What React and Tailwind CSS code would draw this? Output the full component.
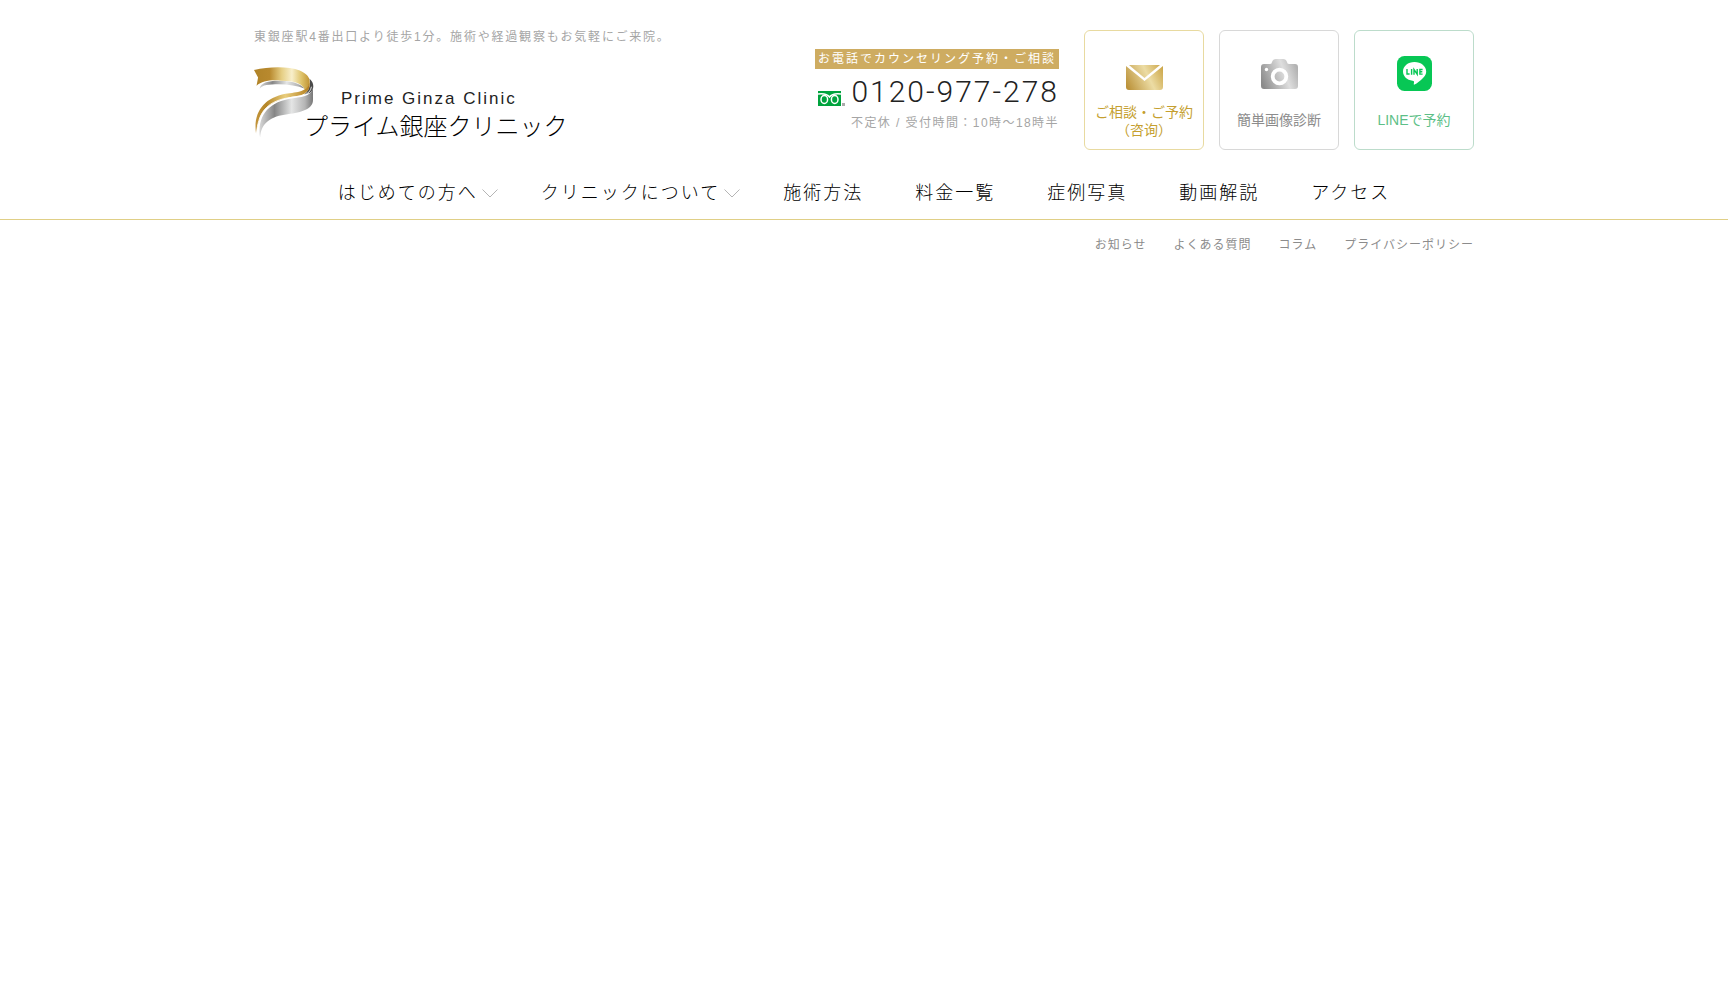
const MAIN_NAV = [
  { label: 'はじめての方へ', menu: true },
  { label: 'クリニックについて', menu: true },
  { label: '施術方法' },
  { label: '料金一覧' },
  { label: '症例写真' },
  { label: '動画解説' },
  { label: 'アクセス' },
]

const SUB_NAV = ['お知らせ', 'よくある質問', 'コラム', 'プライバシーポリシー']

function RibbonMark() {
  return (
    <svg viewBox="0 0 59 70" className="h-[72px] w-[60px] shrink-0" aria-hidden>
      <defs>
        <linearGradient id="gold" x1="0" x2="1" y1="0" y2="0">
          <stop offset="0" stopColor="#b08328" />
          <stop offset="0.28" stopColor="#b8892e" />
          <stop offset="0.5" stopColor="#e6cf85" />
          <stop offset="0.68" stopColor="#f8efcb" />
          <stop offset="0.85" stopColor="#dfc46c" />
          <stop offset="1" stopColor="#c09332" />
        </linearGradient>
        <linearGradient id="gold-tail" x1="0" x2="1" y1="0" y2="0">
          <stop offset="0" stopColor="#c2943a" />
          <stop offset="0.2" stopColor="#b58628" />
          <stop offset="0.55" stopColor="#e9cd7c" />
          <stop offset="1" stopColor="#b27d1d" />
        </linearGradient>
        <linearGradient id="silver" x1="0" x2="1" y1="0" y2="0">
          <stop offset="0" stopColor="#d8d8d8" />
          <stop offset="0.28" stopColor="#868686" />
          <stop offset="0.6" stopColor="#e4e5e5" />
          <stop offset="0.85" stopColor="#b5b5b5" />
          <stop offset="1" stopColor="#777" />
        </linearGradient>
      </defs>
      <path d="M5.500 21C6 15 14 13 24 13C36 13 45 15 50 21C43 18 34 16.500 24 16.500C15 16.500 8 17 5.500 21Z" fill="url(#silver)" />
      <path d="M54.500 11C60 16 59 22 55 25L49 27C54 23 56 18 54.500 11Z" fill="#4a4a4a" />
      <path d="M0 2.500C16 -1 34 -1 45 3C57 8 57 17 50 22C48 16 40 13 27 13C17 12 8 13 2.500 18L4 10Z" fill="url(#gold)" />
      <path d="M2 65C-1 44 10 30 31 26C43 24 53 24 54.500 14C56 22 51 27 42 28C22 31 8 38 5 52C3 57 3 61 2 65Z" fill="url(#gold-tail)" />
      <path d="M6 69C3 49 13 35 34 31C47 29 56 29 58 20V32C58 41 47 44 33 46C17 48 7 54 6 69Z" fill="url(#silver)" />
      <path d="M2.500 65C4 46 11 34 33 30C46 28 55 28 56.500 19" fill="none" stroke="#fff" strokeWidth="0.800" />
    </svg>
  )
}

function FreeDialIcon() {
  return (
    <svg viewBox="0 0 27 15" className="h-[15px] w-[27px] shrink-0" aria-hidden>
      <rect width="23" height="15" fill="#00a33e" />
      <g fill="none" stroke="#fff" strokeWidth="1.500">
        <ellipse cx="6.300" cy="8.500" rx="3.300" ry="4" />
        <ellipse cx="16.700" cy="8.500" rx="3.300" ry="4" />
        <path d="M0 3C4 2.500 9 2.500 11.500 6C14 2.500 19 2.500 23 3" />
      </g>
      <rect x="24" y="12" width="3" height="3" fill="#aaa" />
    </svg>
  )
}

function MailIcon() {
  return (
    <svg viewBox="0 0 37 25" className="h-[25px] w-[37px]" aria-hidden>
      <defs>
        <linearGradient id="mail" gradientUnits="userSpaceOnUse" x1="0" x2="37" y1="22" y2="4">
          <stop offset="0" stopColor="#b98f35" />
          <stop offset="0.6" stopColor="#ecdca4" />
          <stop offset="1" stopColor="#cda84c" />
        </linearGradient>
      </defs>
      <path d="M3 0H34L18.500 13Z" fill="url(#mail)" />
      <path d="M0 1L18.500 16L37 1V22Q37 25 34 25H3Q0 25 0 22Z" fill="url(#mail)" />
    </svg>
  )
}

function CameraIcon() {
  return (
    <svg viewBox="0 0 37 30" className="h-[30px] w-[37px]" aria-hidden>
      <defs>
        <linearGradient id="camera" x1="0" x2="1" y1="0.700" y2="0.400">
          <stop offset="0" stopColor="#8b8b8b" />
          <stop offset="0.65" stopColor="#dedede" />
          <stop offset="1" stopColor="#b2b2b2" />
        </linearGradient>
      </defs>
      <path
        d="M3 5H9Q11 5 11 3Q12 0 15 0H22Q25 0 26 3Q26 5 28 5H34Q37 5 37 8V27Q37 30 34 30H3Q0 30 0 27V8Q0 5 3 5Z"
        fill="url(#camera)"
      />
      <circle cx="18.500" cy="17.500" r="6.800" fill="none" stroke="#fff" strokeWidth="3.800" />
      <circle cx="5.500" cy="10.500" r="1.700" fill="#fff" />
    </svg>
  )
}

function LineIcon() {
  return (
    <svg viewBox="0 0 35 35" className="size-[35px]" aria-hidden>
      <rect width="35" height="35" rx="7.500" fill="#07c755" />
      <path d="M17.500 6C24 6 29.200 10.200 29.200 15.500C29.200 18 28 20 26 22C23.500 24.800 20 27.300 17.500 28.600C16.500 29 16.700 28 17 26.500C17.200 25.300 16.800 25 15.500 24.800C10 24 6 20.300 6 15.500C6 10.200 11 6 17.500 6Z" fill="#fff" />
      <path d="M10 13V18H12.600M14.600 13V18.700M17 18.700V13.500L20.200 18.200V13M25.600 13.500H22.900V18.100H25.600M22.900 15.800H25.300" fill="none" stroke="#07c755" strokeWidth="1.400" />
    </svg>
  )
}

function Chevron() {
  return (
    <svg viewBox="0 0 16 9" className="ml-1 h-[9px] w-4" fill="none" stroke="#b5b5b5" aria-hidden>
      <path d="M0.500 0.500L8 8L15.500 0.500" />
    </svg>
  )
}

export default function App() {
  return (
    <div className="min-h-screen bg-white font-['Liberation_Sans','Noto_Sans_CJK_JP',sans-serif] text-[#222]">
      <header className="border-b border-[#e0cf86]">
        <div className="mx-auto flex max-w-[1220px] items-start justify-between pt-[30px]">
          <div>
            <p className="text-xs leading-[14px] tracking-[0.15em] text-[#a5a5a5]">
              東銀座駅4番出口より徒歩1分。施術や経過観察もお気軽にご来院。
            </p>
            <a href="#top" className="mt-[23px] flex">
              <RibbonMark />
              <span className="-ml-[10px] flex flex-col pt-[22px] whitespace-nowrap">
                <span className="pl-[37px] text-[17px] leading-5 tracking-[2px]">Prime Ginza Clinic</span>
                <span className="font-['Noto_Sans_CJK_JP',sans-serif] text-2xl leading-8 font-light text-black">
                  プライム銀座クリニック
                </span>
              </span>
            </a>
          </div>

          <div className="flex items-start">
            <div className="mr-[25px] flex flex-col items-end pt-[19px]">
              <p className="bg-[#ceac61] px-[3px] text-xs leading-5 tracking-[2px] text-white">
                お電話でカウンセリング予約・ご相談
              </p>
              <a href="tel:0120977278" className="flex items-end gap-1.5">
                <span className="pb-[9px]">
                  <FreeDialIcon />
                </span>
                <span className="font-[Roboto] text-3xl leading-[46px] font-light tracking-[2px]">0120-977-278</span>
              </a>
              <p className="text-xs leading-4 tracking-[0.12em] text-[#a5a5a5]">不定休 / 受付時間：10時～18時半</p>
            </div>

            <div className="flex gap-[15px] text-center text-sm leading-[18px]">
              <a href="#contact" className="flex size-[120px] flex-col items-center rounded-md border border-[#e8daa0] pt-[34px] text-[#c59f30]">
                <MailIcon />
                <span className="mt-[13px]">
                  ご相談・ご予約
                  <br />
                  （咨询）
                </span>
              </a>
              <a href="#diagnosis" className="flex size-[120px] flex-col items-center rounded-md border border-[#d8d8d8] pt-7 text-[#8c8c8c]">
                <CameraIcon />
                <span className="mt-[22px]">簡単画像診断</span>
              </a>
              <a href="#line" className="flex size-[120px] flex-col items-center rounded-md border border-[#bcdccb] pt-[25px] text-[#5dbf87]">
                <LineIcon />
                <span className="mt-5">LINEで予約</span>
              </a>
            </div>
          </div>
        </div>

        <nav className="mt-[29px] flex justify-center pb-3 text-lg leading-7 font-light text-black" aria-label="メイン">
          {MAIN_NAV.map((item) =>
            item.menu ? (
              <button key={item.label} type="button" className="flex items-center pr-[17px] pl-[26px] tracking-[2px]">
                {item.label}
                <Chevron />
              </button>
            ) : (
              <a key={item.label} href="#page" className="px-[26px] tracking-[2px]">
                {item.label}
              </a>
            ),
          )}
        </nav>
      </header>

      <nav className="mx-auto flex max-w-[1220px] justify-end gap-[27px] pt-[17px] text-xs leading-4 tracking-[1px] text-[#8c8c8c]" aria-label="サブ">
        {SUB_NAV.map((label) => (
          <a key={label} href="#page">
            {label}
          </a>
        ))}
      </nav>
    </div>
  )
}
